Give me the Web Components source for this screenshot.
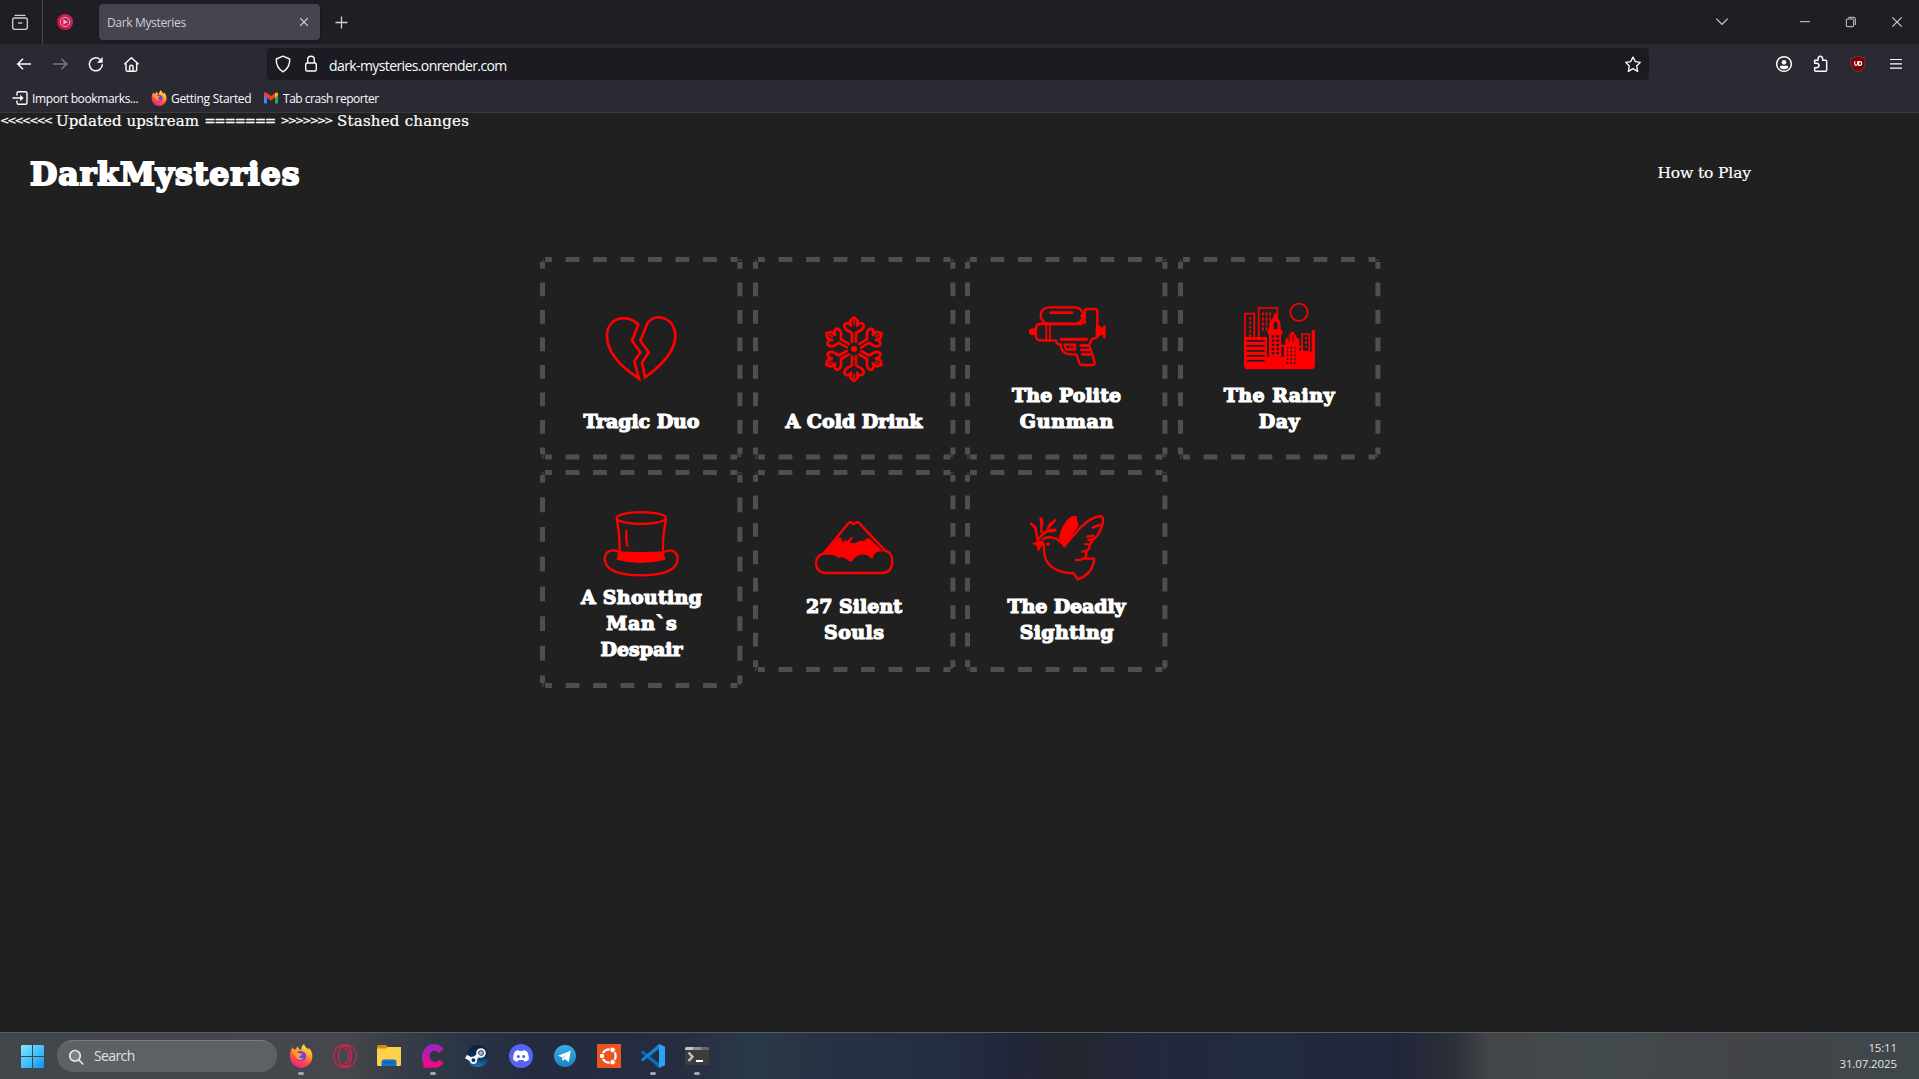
<!DOCTYPE html>
<html lang="en">
<head>
<meta charset="utf-8">
<title>Dark Mysteries</title>
<style>
html,body{margin:0;height:100%;background:#202020;overflow:hidden}
body{display:flex;flex-direction:column;height:1079px;font-family:"Open Sans","Noto Sans",sans-serif;color:#fbfbfe}
dark-page{flex:1}
</style>
</head>
<body>
<tab-strip></tab-strip>
<nav-bar></nav-bar>
<bookmark-bar></bookmark-bar>
<dark-page></dark-page>
<task-bar></task-bar>
<script>
class Base extends HTMLElement{
  constructor(){super();this.attachShadow({mode:'open'}).innerHTML=this.view();}
  view(){return '';}
}
const define=(name,html)=>customElements.define(name,class extends Base{view(){return html;}});

/* One line of text whose letter spacing is set so that it fills the width in "w". */
customElements.define('fit-text',class extends Base{
  view(){return `<style>:host{display:block;white-space:pre;width:max-content}span{display:inline-block}</style><span><slot></slot></span>`;}
  connectedCallback(){
    const fit=()=>{
      const s=this.shadowRoot.querySelector('span'),n=this.textContent.length,w=+this.getAttribute('w');
      s.style.letterSpacing='0px';
      const r=s.getBoundingClientRect().width;
      if(r){const g=(w-r)/(n-0.5);s.style.letterSpacing=g.toFixed(3)+'px';s.style.marginRight=(-g).toFixed(3)+'px';}
    };
    fit();requestAnimationFrame(fit);
  }
});

const fox=`<svg viewBox="0 0 24 24"><defs><linearGradient id="a" x1=".75" y1="0" x2=".3" y2="1"><stop offset="0" stop-color="#fff14a"/><stop offset=".35" stop-color="#ffa62b"/><stop offset=".65" stop-color="#ff4f3e"/><stop offset="1" stop-color="#e8189c"/></linearGradient></defs>
<path fill="url(#a)" d="M1 12C.8 8 2 5.500 3.600 3.200L5 5.500 7 5l1.500-2.700 2 3.200 1.600.4C12 4 13 1.500 15.200 0c.3 2 1.300 3.400 3 4.500l1.200 1.300.3-2C22 6.500 23.500 9 23.400 12.600 23.200 19 18 24 12 24S1.300 19 1 12Z"/>
<path fill="#7a3fd8" d="M8 8.200c2.500-2 7-1.600 8.700 1.600 1.600 3.400-.6 7.200-4.400 7.300-2.900 0-5.300-2.300-4.800-4.900l3.200-.2c1.500-.3 2.300-1.300 1.700-2C11.500 9.300 9.500 9.700 8 8.200Z"/>
<path fill="#ff9a36" d="M3.500 7.500C6 6.500 9 8 8.700 9c1.500.7 3 .3 4 .6.700 1.400-1.200 1.900-2.400 2.800 0 1.500 2 2.600 4.200 1.600-.9 2-4 2.700-6 1C7 14 6.500 12 5.500 11.500Z"/></svg>`;

define('tab-strip',`<style>
:host{display:flex;height:44px;background:#1f1e25;color:#d0cfd6}
svg{display:block;flex:none}
.tab{display:flex;align-items:center;justify-content:space-between;box-sizing:border-box;width:221px;height:36px;margin:4px 0 0 11px;padding:0 8px 0 8px;background:#46454f;border-radius:4px;box-shadow:0 0 2px #0008;font-size:12px}
.grow{flex:1}.div{width:1px;background:#4a4953}
</style>
<svg width="42" height="44" viewBox="0 0 126 132" fill="none" stroke="#cfced5" stroke-width="4"><path d="M45 46h30" stroke-linecap="round"/><rect x="38" y="54" width="44" height="34" rx="6"/><path d="M54 69h13"/></svg>
<div class="div"></div>
<svg width="45" height="44" viewBox="129 0 135 132"><defs><linearGradient id="r" x1="0" x2="1" y1=".7" y2=".2"><stop offset="0" stop-color="#d01034"/><stop offset="1" stop-color="#c52872"/></linearGradient></defs><circle cx="195" cy="66" r="24" fill="url(#r)"/><circle cx="195" cy="66" r="14" fill="none" stroke="#dcb0c0" stroke-width="3"/><path d="M190 58v16l13-8z" fill="#e3c4ce"/></svg>
<div class="tab"><fit-text w="79">Dark Mysteries</fit-text><svg width="16" height="16" viewBox="0 0 16 16" stroke="#d6d5dc" stroke-width="1.200"><path d="M4.200 4.200l7.600 7.600M11.800 4.200l-7.600 7.600"/></svg></div>
<svg width="44" height="44" viewBox="0 0 44 44" stroke="#cfced5" stroke-width="1.300"><path d="M15.500 22.500h12M21.500 16.500v12"/></svg>
<div class="grow"></div>
<svg width="219" height="44" viewBox="420 0 657 132" fill="none" stroke="#cfced5" stroke-width="3.600"><path d="M469 56l17 17 17-17"/><path d="M720 65h30" stroke-width="3"/><rect x="859" y="57" width="22" height="23" rx="2" stroke-width="3"/><path d="M865 52h17q4 0 4 4v19" stroke-width="3"/><path d="M997 52l28 28M1025 52l-28 28"/></svg>`);

define('nav-bar',`<style>
:host{display:flex;align-items:center;height:40px;background:#2b2a33}
svg{display:block;flex:none}
.left{display:flex;width:261px;padding-left:6px}
.url{display:flex;align-items:center;box-sizing:border-box;width:1382px;height:32px;background:#1c1b22;border-radius:4px;padding:0 7px 0 8px;font-size:14px;color:#fbfbfe}
.url .grow{flex:1}.url svg+svg{margin:0 10px 0 12px}.url fit-text{padding-top:2px}
</style>
<div class="left">
<svg width="36" height="36" viewBox="18 138 108 108" fill="none" stroke="#fbfbfe" stroke-width="4.500"><path d="M93 192H54M69 176l-16 16 16 16"/></svg>
<svg width="36" height="36" viewBox="126 138 108 108" fill="none" stroke="#797881" stroke-width="4.500"><path d="M159 192h39M184 176l16 16-16 16"/></svg>
<svg width="36" height="36" viewBox="234 138 108 108" fill="none" stroke="#fbfbfe" stroke-width="4.500"><path d="M300 178a19.500 19.500 0 1 0 7 15"/><path d="M308 171v17h-17z" fill="#fbfbfe" stroke="none"/></svg>
<svg width="36" height="36" viewBox="342 138 108 108" fill="none" stroke="#fbfbfe" stroke-width="4.300" stroke-linejoin="round"><path d="M373 193l21-20 22 20M378 190v19q0 5 5 5h22q5 0 5-5v-19M389 213v-14q5-6 10 0v14"/></svg>
</div>
<div class="url">
<svg width="16" height="18" viewBox="0 0 16 18" fill="none" stroke="#fbfbfe" stroke-width="1.400" stroke-linejoin="round"><path d="M8 1.200L14.700 4c.2 5-1.500 9.800-6.700 12.800C2.800 13.800 1.100 9 1.300 4z"/></svg>
<svg width="16" height="18" viewBox="0 0 16 18" fill="none" stroke="#fbfbfe" stroke-width="1.400"><rect x="2.700" y="8" width="10.600" height="8" rx="1.500"/><path d="M4.700 8V4.600a3.300 3.300 0 0 1 6.600 0V8"/></svg>
<fit-text w="178">dark-mysteries.onrender.com</fit-text><div class="grow"></div>
<svg width="18" height="18" viewBox="192 165 54 54" style="margin-right:0" fill="none" stroke="#fbfbfe" stroke-width="4" stroke-linejoin="round"><path d="M219 171l7 14 15 2-11 11 3 16-14-8-14 8 3-16-11-11 15-2z"/></svg>
</div>
<svg width="270" height="36" viewBox="267 138 810 108" fill="none" stroke="#fbfbfe" stroke-width="4.500" stroke-linejoin="round"><circle cx="672" cy="192" r="22"/><circle cx="672" cy="187" r="7" fill="#fbfbfe" stroke="none"/><path d="M660 197h24q3 10-12 11-15-1-12-11z" fill="#fbfbfe" stroke="none"/>
<path d="M764 184v-3h10v-5q1-7 7-7t7 7v5h9q3 0 3 3v27q0 3-3 3h-30q-3 0-3-3v-8h6q7-1 7-6.500t-7-6.500h-6z"/>
<path d="M894 168q10 5 21 6v18q-2 16-21 24-19-8-21-24v-18q11-1 21-6z" fill="#800000" stroke="#5d5358" stroke-width="2"/><path d="M884 184v7q0 5 4 5t5-5v-7M896 185v11h3q6 0 6-5.500t-6-5.500z" stroke-width="3.500"/>
<path d="M990 178.500h36M990 191.500h36M990 204.500h36" stroke-width="3.600"/></svg>`);

define('bookmark-bar',`<style>
:host{display:flex;align-items:center;box-sizing:border-box;height:29px;padding:0 0 0 12px;background:#2b2a33;border-bottom:1px solid #3a3942;font-size:12px;color:#fbfbfe}
div{display:flex;align-items:center}svg{display:block;width:16px;height:16px;margin-right:4px}fit-text{padding-top:1px}
</style>
<div style="width:139px"><svg viewBox="0 0 16 16" fill="none" stroke="#fbfbfe" stroke-width="1.400"><path d="M5 5.500V3.200q0-1.500 1.500-1.500h7q1.500 0 1.500 1.500v9.600q0 1.500-1.500 1.500h-7Q5 14.300 5 12.800v-2.300M.5 8h9"/><path d="M8.200 4.800L11.600 8l-3.400 3.200z" fill="#fbfbfe" stroke="none"/></svg><fit-text w="106.500">Import bookmarks...</fit-text></div>
<div style="width:112px">${fox}<fit-text w="80.500">Getting Started</fit-text></div>
<div><svg viewBox="0 0 16 16"><path fill="#4285f4" d="M1 4l3 2v7.500H2q-1 0-1-1z"/><path fill="#34a853" d="M15 4l-3 2v7.500h2q1 0 1-1z"/><path fill="#ea4335" d="M1 5.500V3.500Q1.500 1.500 3.500 2.700L8 6l4-3v4.500L8 10.500 1 5.500z"/><path fill="#fbbc04" d="M12 3q2.700-1.500 3 .8v1.700l-3 2.200z"/></svg><fit-text w="96">Tab crash reporter</fit-text></div>`);

const dash=`<svg class="b"><g stroke="#4e504e" stroke-width="5" stroke-dasharray="14 14" stroke-dashoffset="7">
<line pathLength="196" x1="0" x2="100%" y1="-2.500" y2="-2.500"/>
<line pathLength="196" x1="-2.500" x2="-2.500" y1="0" y2="100%"/></g></svg>
<svg class="b far"><g stroke="#4e504e" stroke-width="5" stroke-dasharray="14 14" stroke-dashoffset="7">
<line pathLength="196" x1="0" x2="100%" y1="100%" y2="100%"/></g></svg>
<svg class="b side"><g stroke="#4e504e" stroke-width="5" stroke-dasharray="14 14" stroke-dashoffset="7">
<line pathLength="196" x1="100%" x2="100%" y1="0" y2="100%"/></g></svg>
<i class="tl"></i><i class="tr"></i><i class="bl"></i><i class="br"></i>`;
define('mystery-card',`<style>
:host{position:relative;display:flex;flex-direction:column;align-items:center;justify-content:flex-end;box-sizing:border-box;width:202.400px;min-height:202.400px;border:5px solid transparent;padding:20px;color:#fff;font:bold 19px/26px "DejaVu Serif",serif;-webkit-text-stroke:1.200px #fff}
:host(.low){min-height:202px;padding-bottom:20.600px}
::slotted(fit-text){transform:translateY(-1px)}
.b{position:absolute;left:0;top:0;width:100%;height:100%;overflow:visible}
.far{transform:translateY(2.500px)}.side{transform:translateX(2.500px)}
i{position:absolute;width:3px;height:2px;background:#454745}
.tl{left:-3px;top:-3px;width:2px;height:3px;opacity:.6}.tr{right:-4px;top:-3px;width:4px;opacity:.6}
.bl{left:-3px;bottom:-4px;width:2px;height:4px;opacity:.7}.br{right:-3px;bottom:-2px;}
</style>${dash}<slot name="icon"></slot><slot></slot>`);

const icon=(vb,s)=>`<svg slot="icon" width="90" height="90" viewBox="${vb} 270 270" fill="none" stroke="red" stroke-width="7" stroke-linejoin="round" stroke-linecap="round">${s}</svg>`;
const line=(w,t)=>`<fit-text w="${w}">${t}</fit-text>`;
const heart=icon('199 207',`<g stroke-linejoin="miter" stroke-linecap="butt" stroke-width="8"><path d="M326 224C297 190 232 200 232 258c0 52 50 98 96 128l-14-52 18-27-25-35z"/><path d="M354 218c31-34 84-10 83 42-2 46-46 90-91 122l-9-44 20-31-25-35z"/></g>`);
const snow=icon('837 207',`<circle cx="972" cy="297" r="9" fill="red" stroke="none"/>`+[0,60,120,180,240,300].map(a=>`<g transform="rotate(${a} 972 297.500) translate(0 -4)" stroke-width="8"><path d="M966 280v-27l-16-9q-8-6-7-15 3-7 11-5 6 1 9 7v-7q-5-5 0-10l9-8 9 8q5 5 0 10v7q3-6 9-7 8-2 11 5 1 9-7 15l-16 9v27"/><path d="M972 216v10" stroke-width="5"/></g>`).join(''));
const gun=icon('214 129',`<rect x="270" y="172" width="127" height="49" rx="24"/><path d="M300 188h64" stroke-width="8"/><path d="M402 219v-34q0-8 8-8h22q8 0 8 8v33M392 197h10M395 215h8"/><path d="M270 222h123M440 222q-2 25-2 40l-16 7q-3 18-18 19M270 222q-14 0-14 12v24q0 13 14 13h46q1 12 14 13"/><path d="M287 224v50M298 224v50" stroke-width="5"/><path d="M235 240l8-5h12v21h-12l-8-6z" fill="red" stroke="none"/><path d="M440 226q10 4 10 12v12q-2 7-12 12M444 234h12v20h-12z" fill="red" stroke-width="4"/><path d="M461 230v32" stroke-width="8"/><path d="M328 268h83" stroke-width="9" stroke-linecap="butt"/><path d="M330 284q2 26 26 29h21l10 28q2 4 7 4h34q5-2 4-8l-14-45"/><path d="M341 284h32v15h-26z"/><path d="M358 289v9l10-7v8" stroke-width="3"/><path d="M390 287l25-1M392 300h22M395 313h23" stroke-width="8"/>`);
const win=(x0,y0,nx,ny,dx,dy,w,h)=>{let s='';for(let i=0;i<nx;i++)for(let j=0;j<ny;j++)s+=`M${x0+i*dx} ${y0+j*dy}h${w}v${h}h-${w}z`;return s;};
const city=icon('852 129',`<circle cx="1047" cy="187" r="26" stroke-width="5"/><g stroke-width="5" stroke-linejoin="miter"><path d="M885 263v-72h28v72M926 263v-89h56v27M1056 302v-50h22v50"/></g><path fill="red" stroke="none" d="${win(898,201,1,5,8,13,5,8)}${win(936,187,3,4,11,15,5,10)}${win(1065,261,1,3,8,13,6,7)}"/>
<path fill="red" stroke="none" d="M882 261h69v60h6v-66l-4-5v-10h4l3-26 9-10 4-14h5l5 14 7 10 3 26h4v12l-4 4v28h13v-16l9-6v-6l6-3v-4l6-5 6 5v4l6 3v6l9 6v38h37v-65h10v103q0 14-14 14H896q-14 0-14-14z"/><path fill="#202020" stroke="none" d="M971 220l6-6 5 6v18h-11zM994 290h7v31h-7zM890 270h55v5h-55zM890 285h54v5h-54zM890 300h54v5h-54zM890 315h54v5h-54zM890 330h54v5h-54zM952 292h5v28h-5z${win(965,256,2,5,14,12.500,8,7)}${win(1011,290,3,5,11,11.500,4,6)}"/><path d="M1017 256v17M1029 256v17" stroke="#202020" stroke-width="3"/><path d="M1046 290h10M1048 305h30" stroke-width="6"/>`);
const hat=icon('199 105',`<ellipse cx="335" cy="174" rx="74" ry="17.500"/><path d="M261 177q10 46 9 100M409 177q-10 46-9 100" stroke-linecap="butt"/><path d="M266 274q70 4 136 0l5 25q-72 20-146 0z" fill="red" stroke="none"/><path d="M266 275q-20-8-30 0-15 10-9 32 12 38 107 39 96-1 108-39 6-22-9-32-10-8-30 1"/><path d="M290 213q-1 28 3 44"/>`);
const fuji=icon('837 136',`<path d="M956 193q6-6 9 0 6 5 12 0 6-6 12 2l76 81q22 5 22 33-1 34-33 34H890q-31 0-32-30 0-22 22-28z"/><path fill="red" stroke="none" d="M876 290l45-49q7-8 13-3l3 14 8-8 6 4 14-14 4 3-10 15q12 4 26-3 8-6 16-1l8-8 8-2 45 43q-18-8-29 6-4 6-6 14-4-3-9-7-10-9-24-6-20 3-28 21l-12-3q-12-14-29-9-8-10-22-8-18-2-27 1z"/>`);
const dove=icon('214 136',`<path d="M276 242c14-10 36-8 51 5 8 7 12 11 14 16 30-37 66-85 107-91 14 2 10 24 3 37-6 16-12 27-24 33l-14 2M426 242c-2 12-9 18-22 14M416 258c3 12-6 21-21 21M406 280q4 14-6 19-10 6-24 5M400 299l31 1c-4 34-24 54-50 62l-12-19c-46 2-84-20-88-58-1-10 0-20-3-30M426 207l22-9M410 234l18-3"/><path d="M325 238c3-24 19-59 42-66 12-4 14 6 12 14 10 12 0 22-9 34l-28 42q-6-12-17-24z" fill="red" stroke="none"/><circle cx="292" cy="256" r="5.500" fill="red" stroke="none"/><path d="M278 250l-12-3-18 8 11 4 4 17 8-15z" fill="red" stroke-width="4"/><path d="M241 195l13 12 7 36q12-14 29-26M272 179v42M290 210l23-25M277 226q14-14 37-12" stroke-width="7"/><path d="M241 195l10 6 7 16zM268 180q12-4 6 24zM292 206q4-14 20-20zM288 218q12-10 28-2-10 6-28 2z" fill="red" stroke-width="4"/>`);

define('dark-page',`<style>
:host{display:block;background:#202020;color:#fff;font-family:"DejaVu Serif",serif}
svg{overflow:visible}
.top{display:flex;height:16px;font-size:15px;line-height:16px;-webkit-text-stroke:.2px #fff}
.ar{font-size:11px;font-family:"DejaVu Sans",sans-serif}
.eq{font-size:13px;-webkit-text-stroke:.5px #fff}
header{display:flex;justify-content:space-between;align-items:center;height:44px;margin:23px 168px 0 30px}
h1{margin:0;font-size:31.500px;line-height:44px;-webkit-text-stroke:2px #fff}
.how{font-size:15.500px;line-height:18px;padding-bottom:2px;-webkit-text-stroke:.2px #fff}
main{display:grid;grid-template-columns:repeat(4,202.400px);gap:10.200px;align-items:start;justify-content:center;margin:61.400px 0 0 1.600px}
</style>
<div class="top"><fit-text class="ar" w="52" style="width:56px">&lt;&lt;&lt;&lt;&lt;&lt;&lt;</fit-text><fit-text w="143" style="width:148.500px">Updated upstream</fit-text><fit-text class="eq" w="71" style="width:76px">=======</fit-text><fit-text class="ar" w="52" style="width:56.500px">&gt;&gt;&gt;&gt;&gt;&gt;&gt;</fit-text><fit-text w="132">Stashed changes</fit-text></div>
<header><h1><fit-text w="270">DarkMysteries</fit-text></h1><fit-text class="how" w="93.500">How to Play</fit-text></header>
<main>
<mystery-card>${heart}${line(116,'Tragic Duo')}</mystery-card>
<mystery-card>${snow}${line(137,'A Cold Drink')}</mystery-card>
<mystery-card>${gun}${line(109,'The Polite')}${line(94,'Gunman')}</mystery-card>
<mystery-card>${city}${line(111,'The Rainy')}${line(41,'Day')}</mystery-card>
<mystery-card>${hat}${line(121,'A Shouting')}${line(71,'Man`s')}${line(82,'Despair')}</mystery-card>
<mystery-card class="low">${fuji}${line(96,'27 Silent')}${line(60,'Souls')}</mystery-card>
<mystery-card class="low">${dove}${line(118,'The Deadly')}${line(94,'Sighting')}</mystery-card>
</main>`);

define('task-bar',`<style>
:host{display:flex;align-items:center;box-sizing:border-box;height:47px;border-top:1px solid #5a5d60;background:linear-gradient(90deg,#42474b 0,#44474b 350px,#3a4049 385px,#2e3845 440px,#242b40 530px,#262d42 680px,#2a3a46 755px,#293244 810px,#242c42 960px,#22263a 1010px,#23272f 1070px,#24283c 1140px,#222b3f 1270px,#22263a 1400px,#2c3038 1455px,#434649 1490px,#434a4d 1600px,#424448 1740px,#3f474a 1919px)}
.win{width:57px;display:flex}.win svg{margin-left:21px}
svg{display:block;overflow:visible}
.search{display:flex;align-items:center;box-sizing:border-box;width:220px;height:32px;border-radius:16px;background:#5c6164;border-top:1px solid #7b7f82;padding-left:11px;font-size:14px;color:#dfe1e3;gap:10px}
.search fit-text{padding-bottom:2px}
.apps{display:flex;margin-left:2px;flex:1}
.apps div{position:relative;width:44px;height:46px;display:flex;align-items:center;justify-content:center}
.apps svg{width:24px;height:24px}
.on::after{content:"";position:absolute;left:19px;bottom:4px;width:6px;height:3px;border-radius:2px;background:#a2a5aa}
.clock{display:flex;flex-direction:column;align-items:flex-end;margin-right:22px;font-size:11.500px;line-height:16px;color:#e2e4e5}
</style>
<div class="win"><svg width="23" height="23" viewBox="0 0 23 23"><defs><linearGradient id="w" x2="1" y2="1"><stop offset="0" stop-color="#8fe3ff"/><stop offset=".5" stop-color="#45c2fb"/><stop offset="1" stop-color="#0f93f7"/></linearGradient></defs><path fill="url(#w)" d="M1 0h10v11H0V1q0-1 1-1zM12 0h10q1 0 1 1v10H12zM0 12h11v11H1q-1 0-1-1zM12 12h11v10q0 1-1 1H12z"/></svg></div>
<div class="search"><svg width="16" height="16" viewBox="0 0 16 16" fill="#7d8185" stroke="#e4e6e8" stroke-width="1.700"><circle cx="7" cy="6.800" r="5.300"/><path d="M11 11l3.800 4" stroke-linecap="round"/></svg><fit-text w="41">Search</fit-text></div>
<div class="apps">
<div class="on">${fox}</div>
<div><svg viewBox="0 0 24 24" fill="none" stroke="#e31b48" stroke-width="1.200"><circle cx="12" cy="12" r="11.400"/><ellipse cx="12" cy="12" rx="6.500" ry="10.700"/><path d="M10 3.500c8 2 8 15 0 17"/></svg></div>
<div><svg viewBox="0 0 24 24"><path fill="#d58f0a" d="M0 3q0-2 2-2h7l3 3v4H0z"/><path fill="#ffd04a" d="M0 4.500h9l2-1.500h13v17.500q0 1.500-1.500 1.500H1.500Q0 22 0 20.500z"/><path fill="#1075c9" d="M4.500 22v-4q0-2.500 2.500-2.500h10q2.500 0 2.500 2.500v4z"/><path d="M8 18.500h8" stroke="#0a5497"/></svg></div>
<div class="on"><svg viewBox="0 0 24 24"><defs><linearGradient id="c" x2=".2" y2="1"><stop offset="0" stop-color="#8f28d0"/><stop offset="1" stop-color="#f40a84"/></linearGradient></defs><path fill="url(#c)" d="M22.500 5l-4.500 4Q12 4 9 9.500q-2 8 5.500 8.500 2.500-.5 4-2.500l4 3.500q-5 6-11 4.500L2 24q1-2 .5-4.500Q0 15 1.500 9 5-.5 13.500 0q6 .5 9 5z"/></svg></div>
<div><svg viewBox="0 0 24 24"><defs><linearGradient id="s" x2="0" y2="1"><stop offset="0" stop-color="#121a38"/><stop offset=".6" stop-color="#0a3560"/><stop offset="1" stop-color="#1580b8"/></linearGradient></defs><circle cx="12.500" cy="12" r="11" fill="url(#s)"/><path d="M1 12.500l7 4 6-6" stroke="#f1f4f7" stroke-width="4" fill="none"/><circle cx="16" cy="9" r="3.800" fill="none" stroke="#f1f4f7" stroke-width="2"/><circle cx="16" cy="9" r="2" fill="#aab5c4"/><circle cx="8.500" cy="16.200" r="2.800" fill="#17304f" stroke="#f1f4f7" stroke-width="1.800"/></svg></div>
<div><svg viewBox="0 0 24 24"><circle cx="12" cy="12" r="12" fill="#5865f2"/><path fill="#fff" d="M8 6.500l1.500-.4.7 1h3.600l.7-1 1.500.4q2 .5 2.600 2 1.400 3.500 1.300 7-2 1.900-4.400 2.200l-1-1.600h-5l-1 1.600q-2.400-.3-4.400-2.200-.1-3.500 1.300-7Q6 7 8 6.500z"/><circle cx="9.300" cy="12.500" r="1.600" fill="#5865f2"/><circle cx="14.700" cy="12.500" r="1.600" fill="#5865f2"/></svg></div>
<div><svg viewBox="0 0 24 24"><defs><linearGradient id="t" x2="0" y2="1"><stop offset="0" stop-color="#36aee2"/><stop offset="1" stop-color="#1a85c4"/></linearGradient></defs><circle cx="12" cy="12" r="11" fill="url(#t)"/><path fill="#fff" d="M5 11.800L17.800 6.700l-2 11.300-4.100-3-2 2-.8-3.800z"/><path d="M9 13.200l6-4-4.500 5" fill="#bfdcec"/></svg></div>
<div><svg viewBox="0 0 24 24"><path fill="#e95420" d="M0 0h24v24H0z"/><circle cx="12" cy="12" r="6.700" fill="none" stroke="#fff" stroke-width="2.200"/><g fill="#fff" stroke="#e95420" stroke-width="1"><circle cx="5" cy="12" r="2.800"/><circle cx="15.600" cy="5.900" r="2.800"/><circle cx="15.600" cy="18.200" r="2.800"/></g></svg></div>
<div class="on"><svg viewBox="0 0 24 24"><path fill="#0b6db5" d="M0 8.200L1.700 6.500 18 19v5L1 9.500z"/><path fill="#1583d1" d="M0 15.800l1.700 1.700L18 5V0L1 14.500z"/><path fill="#2aa5f2" d="M18 0l6 2.700v18.600L18 24z"/></svg></div>
<div class="on"><svg viewBox="0 0 24 24"><rect y="3" width="24" height="18" rx="1.500" fill="#3d3d3d"/><path fill="#c4c4c4" d="M1.500 3H8v3H0V4.500Q0 3 1.500 3z"/><path fill="#909090" d="M8 3h8v3H8z"/><path fill="#6a6a6a" d="M16 3h6.500Q24 3 24 4.500V6h-8z"/><path d="M3.500 8.500l4 4.200-4 4.300" fill="none" stroke="#c4c4c4" stroke-width="2.300"/><path d="M11 17h7" stroke="#fff" stroke-width="2"/></svg></div>
</div>
<div class="clock"><fit-text w="28.500">15:11</fit-text><fit-text w="57.500">31.07.2025</fit-text></div>`);
</script>
</body>
</html>
